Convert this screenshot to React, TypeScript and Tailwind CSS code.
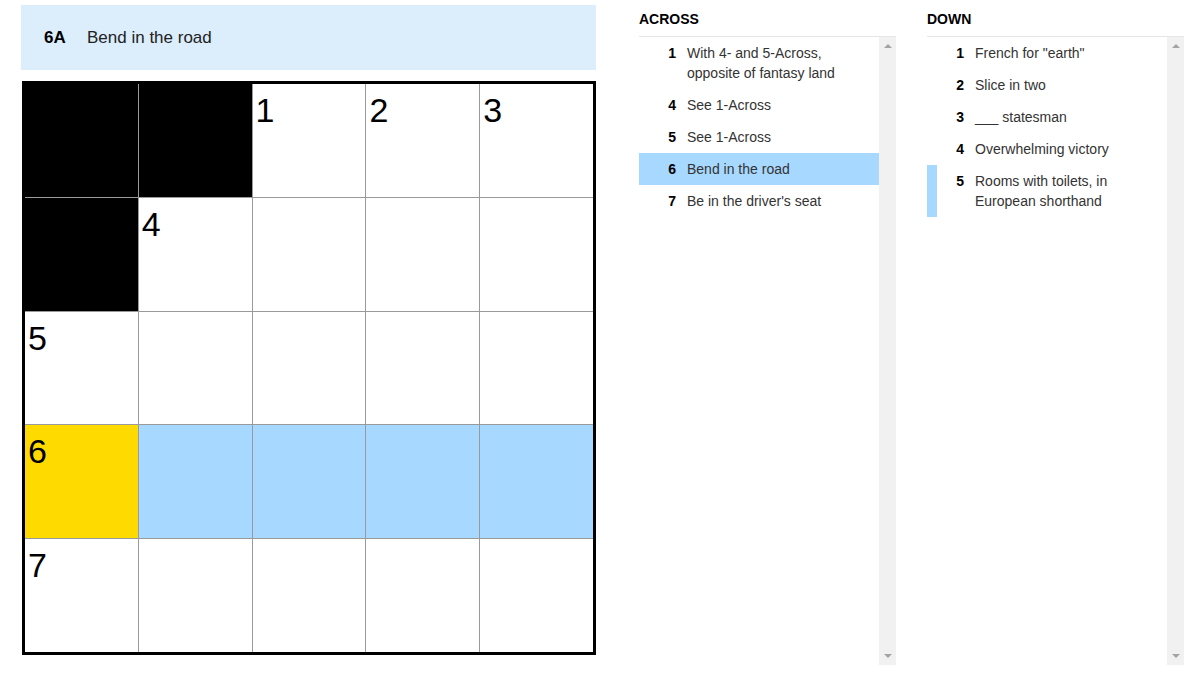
import React from 'react';

type Cell = { black?: boolean; num?: number; tone?: 'yellow' | 'blue' };

const grid: Cell[][] = [
  [{ black: true }, { black: true }, { num: 1 }, { num: 2 }, { num: 3 }],
  [{ black: true }, { num: 4 }, {}, {}, {}],
  [{ num: 5 }, {}, {}, {}, {}],
  [{ num: 6, tone: 'yellow' }, { tone: 'blue' }, { tone: 'blue' }, { tone: 'blue' }, { tone: 'blue' }],
  [{ num: 7 }, {}, {}, {}, {}],
];

const across = [
  { n: 1, text: 'With 4- and 5-Across, opposite of fantasy land' },
  { n: 4, text: 'See 1-Across' },
  { n: 5, text: 'See 1-Across' },
  { n: 6, text: 'Bend in the road', active: true },
  { n: 7, text: "Be in the driver's seat" },
];

const down = [
  { n: 1, text: 'French for "earth"' },
  { n: 2, text: 'Slice in two' },
  { n: 3, text: '___ statesman' },
  { n: 4, text: 'Overwhelming victory' },
  { n: 5, text: 'Rooms with toilets, in European shorthand', crossing: true },
];

type Clue = { n: number; text: string; active?: boolean; crossing?: boolean };

const ClueList = ({ title, clues }: { title: string; clues: Clue[] }) => (
  <div className="flex flex-col w-[257px]">
    <div className="pt-[9px] pb-[7px] text-[14px] leading-[20px] font-bold text-black border-b border-[#e6e6e6]">
      {title}
    </div>
    <div className="flex h-[628px]">
      <ul className="flex-1">
        {clues.map((c) => (
          <li
            key={c.n}
            className={`flex border-l-[10px] py-[6px] text-[14px] leading-[20px] ${
              c.active ? 'bg-[#a7d8ff] border-transparent' : c.crossing ? 'border-[#a7d8ff]' : 'border-transparent'
            }`}
          >
            <span className="w-[27px] shrink-0 text-right font-bold text-black">{c.n}</span>
            <span className="ml-[11px] pr-[20px] text-[#333]">{c.text}</span>
          </li>
        ))}
      </ul>
      <div className="w-[17px] bg-[#f1f1f1] flex flex-col justify-between items-center py-[7px]">
        <div className="w-0 h-0 border-l-[4px] border-r-[4px] border-b-[4px] border-l-transparent border-r-transparent border-b-[#a3a3a3]" />
        <div className="w-0 h-0 border-l-[4px] border-r-[4px] border-t-[4px] border-l-transparent border-r-transparent border-t-[#a3a3a3]" />
      </div>
    </div>
  </div>
);

export default function App() {
  return (
    <div className="w-[1200px] h-[675px] bg-white flex overflow-hidden" style={{ fontFamily: '"Liberation Sans", Arial, sans-serif' }}>
      {/* puzzle side */}
      <div className="ml-[21px] mt-[5px] w-[575px] flex flex-col">
        <div className="h-[65px] bg-[#dcedfc] flex items-center pl-[23px] pt-px text-[17px]">
          <span className="font-bold text-black w-[43px]">6A</span>
          <span className="text-[#222]">Bend in the road</span>
        </div>
        <div className="mt-[11px] ml-px w-[574px] h-[574px] border-[3px] border-black bg-[#9a9a9a] grid grid-cols-5 grid-rows-5 gap-px">
          {grid.flat().map((cell, i) => (
            <div
              key={i}
              className={`relative ${
                cell.black ? 'bg-black' : cell.tone === 'yellow' ? 'bg-[#ffda00]' : cell.tone === 'blue' ? 'bg-[#a7d8ff]' : 'bg-white'
              }`}
            >
              {cell.num && (
                <span className="absolute left-[3px] top-[9px] text-[34px] leading-none text-black">{cell.num}</span>
              )}
            </div>
          ))}
        </div>
      </div>

      {/* clue lists */}
      <div className="ml-[43px] flex gap-[31px]">
        <ClueList title="ACROSS" clues={across} />
        <ClueList title="DOWN" clues={down} />
      </div>
    </div>
  );
}
